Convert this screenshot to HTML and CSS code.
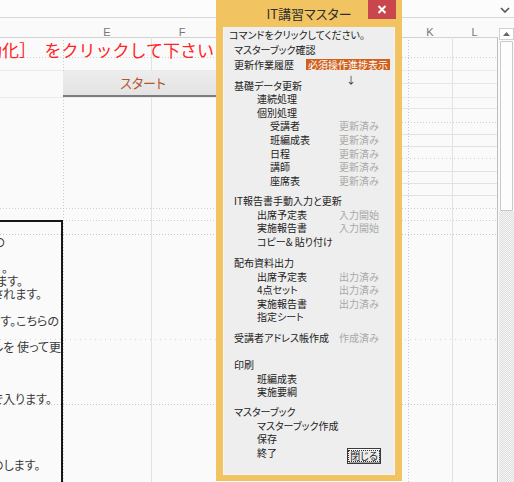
FILE: index.html
```html
<!DOCTYPE html>
<html lang="ja">
<head>
<meta charset="utf-8">
<title>IT講習マスター</title>
<link rel="stylesheet" href="styles.css">
</head>
<body>
<div class="fbar">
  <svg class="chev" width="10" height="6" viewBox="0 0 10 6"><path d="M1 1 L5 5 L9 1" fill="none" stroke="#555" stroke-width="1.6"/></svg>
</div>
<div class="main">
  <div class="sheet">
    <div class="colhead">
      <span class="ch c-d"></span><span class="ch c-e">E</span><span class="ch c-f">F</span><span class="ch c-gap"></span><span class="ch c-k">K</span><span class="ch c-l">L</span>
    </div>
    <div class="grid">
      <div class="redline">［自動化］　をクリックして下さい</div>
      <div class="startbtn">スタート</div>
      <div class="notebox">
        <div class="nl e5">の</div>
        <div class="nl"></div>
        <div class="nl e8">。</div>
        <div class="nl e23">ます。</div>
        <div class="nl e42">されます。</div>
        <div class="nl"></div>
        <div class="nl e59">す。こちらの</div>
        <div class="nl"></div>
        <div class="nl e56">ルを 使って更</div>
        <div class="nl"></div>
        <div class="nl"></div>
        <div class="nl"></div>
        <div class="nl e47">で入ります。</div>
        <div class="nl"></div>
        <div class="nl"></div>
        <div class="nl"></div>
        <div class="nl"></div>
        <div class="nl e37">のします。</div>
      </div>
    </div>
  </div>
  <div class="vscroll">
    <div class="sb-up"><svg width="7" height="4" viewBox="0 0 7 4"><path d="M0 4 L3.5 0 L7 4Z" fill="#666"/></svg></div>
    <div class="sb-thumb"></div>
    <div class="sb-track"></div>
  </div>
</div>

<div class="dialog">
  <div class="titlebar">
    <span></span>
    <span class="title">IT講習マスター</span>
    <span class="close"><svg width="10" height="9" viewBox="0 0 10 9"><path d="M1.5 1 L8.5 8 M8.5 1 L1.5 8" stroke="#fff" stroke-width="2"/></svg></span>
  </div>
  <div class="body">
    <div class="row l0"><span class="lb">コマンドをクリックしてください。</span></div>
    <div class="row l1 g1"><span class="lb">マスターブック確認</span></div>
    <div class="row l1 g1 tagrow"><span class="lb">更新作業履歴</span><span class="tag">必須操作進捗表示</span></div>
    <div class="arrow">↓</div>
    <div class="row l1"><span class="lb">基礎データ更新</span></div>
    <div class="row l2"><span class="lb">連続処理</span></div>
    <div class="row l2"><span class="lb">個別処理</span></div>
    <div class="row l3"><span class="lb">受講者</span><span class="st">更新済み</span></div>
    <div class="row l3"><span class="lb">班編成表</span><span class="st">更新済み</span></div>
    <div class="row l3"><span class="lb">日程</span><span class="st">更新済み</span></div>
    <div class="row l3"><span class="lb">講師</span><span class="st">更新済み</span></div>
    <div class="row l3"><span class="lb">座席表</span><span class="st">更新済み</span></div>

    <div class="row l1 g2"><span class="lb">IT報告書手動入力と更新</span></div>
    <div class="row l2"><span class="lb">出席予定表</span><span class="st">入力開始</span></div>
    <div class="row l2"><span class="lb">実施報告書</span><span class="st">入力開始</span></div>
    <div class="row l2"><span class="lb">コピー&amp; 貼り付け</span></div>

    <div class="row l1 g3"><span class="lb">配布資料出力</span></div>
    <div class="row l2"><span class="lb">出席予定表</span><span class="st">出力済み</span></div>
    <div class="row l2"><span class="lb">4点セット</span><span class="st">出力済み</span></div>
    <div class="row l2"><span class="lb">実施報告書</span><span class="st">出力済み</span></div>
    <div class="row l2"><span class="lb">指定シート</span></div>

    <div class="row l1 g4"><span class="lb">受講者アドレス帳作成</span><span class="st">作成済み</span></div>

    <div class="row l1 g5"><span class="lb">印刷</span></div>
    <div class="row l2"><span class="lb">班編成表</span></div>
    <div class="row l2"><span class="lb">実施要綱</span></div>

    <div class="row l1 g6"><span class="lb">マスターブック</span></div>
    <div class="row l2"><span class="lb">マスターブック作成</span></div>
    <div class="row l2"><span class="lb">保存</span></div>
    <div class="row l2 endrow"><span class="lb">終了</span><button class="closebtn"><span class="focus">閉じる</span></button></div>
  </div>
</div>
</body>
</html>
```

FILE: styles.css
```css
* { box-sizing: border-box; margin: 0; padding: 0; }
html, body { width: 514px; height: 482px; overflow: hidden; }
body {
  position: relative;
  background: #fafafa;
  font-family: "Noto Sans CJK JP", "Noto Sans", sans-serif;
  color: #222;
}

/* ---------- Excel background ---------- */
.fbar {
  height: 18px;
  background: #fcfcfc;
  border-bottom: 1px solid #d8d8d8;
  display: flex;
  justify-content: flex-end;
  align-items: center;
  padding-right: 4px;
}
.chev { margin-top: 2px; }

.main { display: flex; height: 464px; overflow: hidden; }
.sheet { width: 499px; display: flex; flex-direction: column; overflow: hidden; }

.colhead {
  flex: none;
  height: 19px;
  display: flex;
  align-items: flex-start;
  padding-top: 9px;
  font-family: "Liberation Sans", sans-serif;
  font-size: 11px;
  line-height: 10px;
  color: #777;
}
.ch { flex: none; text-align: center; }
.c-d { width: 63px; }
.c-e { width: 88px; }
.c-f { width: 62px; }
.c-gap { width: 195px; }
.c-k { width: 44px; }
.c-l { width: 45px; }

.grid {
  flex: 1;
  min-height: 0;
  overflow: hidden;
  background:
    /* vertical lines */
    repeating-linear-gradient(180deg, #cbcbcb 0 1px, transparent 1px 3px) 63px 0 / 1px 100% no-repeat,
    linear-gradient(#e2e2e2, #e2e2e2) 151px 0 / 1px 100% no-repeat,
    repeating-linear-gradient(180deg, #cbcbcb 0 1px, transparent 1px 3px) 408px 0 / 1px 100% no-repeat,
    linear-gradient(#e2e2e2, #e2e2e2) 452px 0 / 1px 100% no-repeat,
    linear-gradient(#bdbdbd, #bdbdbd) 497px 0 / 1px 100% no-repeat,
    /* horizontal lines */
    linear-gradient(#d2d2d2, #d2d2d2) 0 0 / 497px 1px no-repeat,
    repeating-linear-gradient(90deg, #cfcfcf 0 1px, transparent 1px 3px) 0 20px / 497px 1px no-repeat,
    linear-gradient(#ebebeb, #ebebeb) 0 33px / 497px 1px no-repeat,
    linear-gradient(#e6e6e6, #e6e6e6) 402px 46px / 95px 1px no-repeat,
    linear-gradient(#ebebeb, #ebebeb) 0 60px / 497px 1px no-repeat,
    linear-gradient(#e6e6e6, #e6e6e6) 402px 71px / 95px 1px no-repeat,
    repeating-linear-gradient(90deg, #cfcfcf 0 1px, transparent 1px 3px) 402px 85px / 95px 1px no-repeat,
    linear-gradient(#e2e2e2, #e2e2e2) 402px 97px / 95px 1px no-repeat,
    linear-gradient(#e2e2e2, #e2e2e2) 402px 109px / 95px 1px no-repeat,
    repeating-linear-gradient(90deg, #cfcfcf 0 1px, transparent 1px 4px) 402px 121px / 95px 1px no-repeat,
    linear-gradient(#e2e2e2, #e2e2e2) 402px 134px / 95px 1px no-repeat,
    linear-gradient(#e2e2e2, #e2e2e2) 402px 146px / 95px 1px no-repeat,
    linear-gradient(#e2e2e2, #e2e2e2) 402px 158px / 95px 1px no-repeat,
    repeating-linear-gradient(90deg, #cfcfcf 0 1px, transparent 1px 3px) 0 171px / 497px 1px no-repeat,
    repeating-linear-gradient(90deg, #cfcfcf 0 1px, transparent 1px 3px) 0 183px / 497px 1px no-repeat,
    repeating-linear-gradient(90deg, #c6c6c6 0 1px, transparent 1px 3px) 0 197px / 497px 1px no-repeat,
    repeating-linear-gradient(90deg, #d6d6d6 0 1px, transparent 1px 5px) 0 302px / 497px 1px no-repeat,
    repeating-linear-gradient(90deg, #c6c6c6 0 1px, transparent 1px 3px) 0 367px / 497px 1px no-repeat,
    #fafafa;
}

.redline {
  margin-top: 3px;
  margin-left: -49px;
  font-size: 17px;
  line-height: 20px;
  color: #ff2424;
  white-space: nowrap;
}

.startbtn {
  margin-top: 11px;
  margin-left: 63px;
  width: 160px;
  height: 26px;
  background: linear-gradient(#ededed, #e3e3e3);
  border-bottom: 2px solid #7c7c7c;
  text-align: center;
  font-size: 13px;
  line-height: 24px;
  color: #b4552c;
  font-feature-settings: "palt";
}

.notebox {
  margin-top: 123px;
  margin-left: -10px;
  width: 73px;
  height: 262px;
  border: 2px solid #161616;
  border-bottom: none;
  padding-top: 13px;
  font-size: 12px;
  color: #3a3a3a;
  font-feature-settings: "palt";
  overflow: hidden;
}
.nl {
  height: 13.1px;
  line-height: 13.1px;
  white-space: nowrap;
  text-align: right;
}
.e5 { padding-right: 56px; }
.e8 { padding-right: 53px; }
.e23 { padding-right: 38px; }
.e42 { padding-right: 19px; }
.e59 { padding-right: 2px; }
.e56 { padding-right: 5px; }
.e47 { padding-right: 14px; }
.e37 { padding-right: 24px; }

.vscroll {
  width: 15px;
  padding-top: 10px;
  display: flex;
  flex-direction: column;
}
.sb-up {
  height: 12px;
  background: #fff;
  border: 1px solid #d0d0d0;
  display: flex;
  align-items: center;
  justify-content: center;
}
.sb-thumb {
  height: 170px;
  margin: 1px 1px 0;
  background: #fdfdfd;
  border: 1px solid #c9c9c9;
  border-radius: 1px;
}
.sb-track {
  flex: 1;
  background: repeating-conic-gradient(#dedede 0 25%, #f5f5f5 0 50%) 0 0 / 2px 2px;
}

/* ---------- Dialog ---------- */
.dialog {
  position: absolute;
  left: 216px;
  top: 0;
  width: 186px;
  height: 481px;
  background: #f1c461;
  display: flex;
  flex-direction: column;
}
.titlebar {
  height: 27px;
  display: grid;
  grid-template-columns: 34px 1fr 28px;
  padding-right: 6px;
}
.title {
  text-align: center;
  font-size: 13px;
  line-height: 27px;
  color: #2e2e2e;
  font-feature-settings: "palt";
  white-space: nowrap;
}
.close {
  height: 19px;
  background: #c9464c;
  display: flex;
  align-items: center;
  justify-content: center;
}

.body {
  flex: 1;
  margin: 0 7px 6px;
  background: #eeeeee;
  border: 1px solid #f6f6f6;
  border-top: none;
  padding-top: 1px;
  font-size: 10px;
  font-feature-settings: "palt";
  color: #222;
}
.row {
  display: grid;
  grid-template-columns: 115px auto;
  height: 13.6px;
  line-height: 13.6px;
  white-space: nowrap;
}
.l0 .lb { padding-left: 5px; }
.l1 .lb { padding-left: 10px; }
.l2 .lb { padding-left: 33px; }
.l3 .lb { padding-left: 46px; }
.st { color: #a9a9a9; }

.g1 { margin-top: 1.4px; }
.g2 { margin-top: 6.8px; }
.g3 { margin-top: 7.6px; }
.g4 { margin-top: 7px; }
.g5 { margin-top: 13.4px; }
.g6 { margin-top: 6.2px; }

.tagrow { grid-template-columns: 82px auto; }
.tag {
  align-self: center;
  justify-self: start;
  height: 11px;
  line-height: 11px;
  padding: 0 2px;
  background: #cf611e;
  color: #fff;
  font-feature-settings: normal;
}
.arrow {
  height: 16px;
  line-height: 16px;
  margin-bottom: -9px;
  padding-left: 122px;
  font-size: 10px;
  color: #333;
}

.endrow { grid-template-columns: 123px auto; }
.closebtn {
  align-self: start;
  justify-self: start;
  margin-top: 2px;
  width: 34px;
  height: 16px;
  border: 1px solid #3a3a3a;
  background: #ececec;
  box-shadow: inset 1px 1px 0 #fff, inset -1px -1px 0 #a0a0a0;
  font-family: "Noto Sans CJK JP", sans-serif;
  font-size: 10px;
  font-feature-settings: "palt";
  color: #222;
  display: flex;
  align-items: center;
  justify-content: center;
  padding: 0;
}
.focus {
  display: block;
  border: 1px dotted #333;
  line-height: 10px;
  padding: 0 1px;
}
```
